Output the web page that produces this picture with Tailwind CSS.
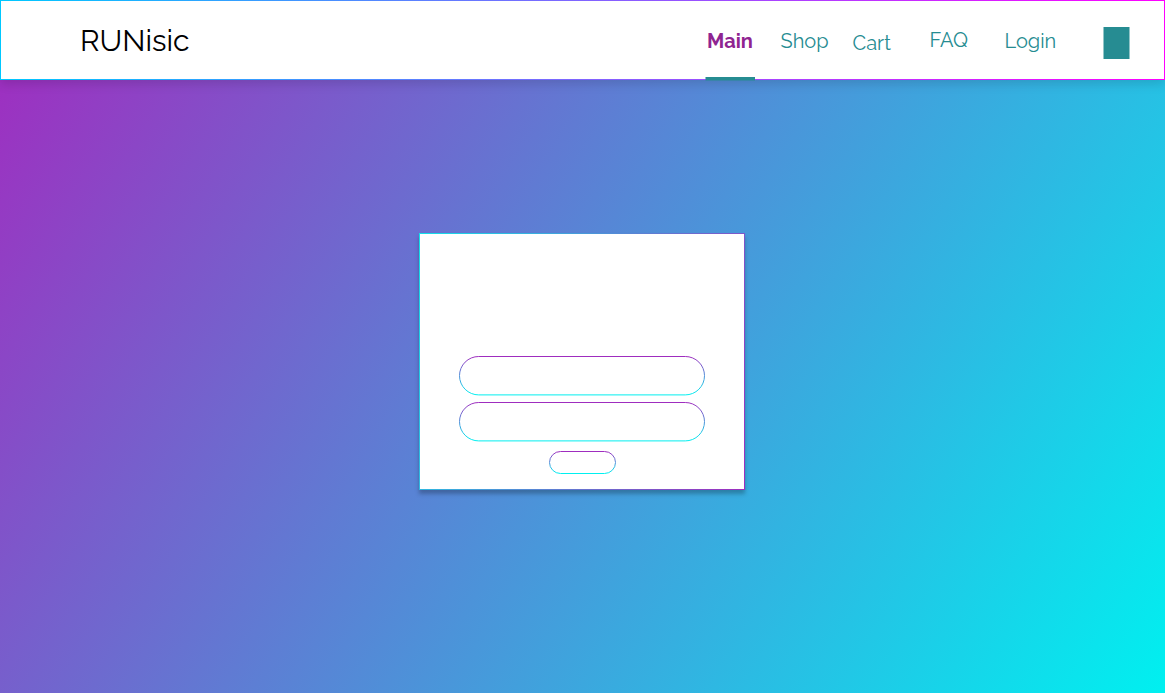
<!DOCTYPE html>
<html lang="en">
<head>
<meta charset="utf-8">
<title>RUNisic</title>
<script src="https://cdn.jsdelivr.net/npm/@tailwindcss/browser@4"></script>
</head>
<body class="flex h-[693px] w-[1165px] flex-col overflow-hidden bg-[linear-gradient(122deg,#a22abf,#00f0f0)] font-['Raleway','Lato',sans-serif]">
  <header class="z-10 h-20 shrink-0 bg-[linear-gradient(to_right,#00c8ff,#ff00ff)] p-px shadow-[0_4px_10px_rgba(0,0,0,0.13)]">
    <div class="flex h-full items-start bg-white pl-[79px] text-xl leading-6 text-[#268c92]">
      <div class="mt-5 h-10 w-[112px] shrink-0 text-[30px] leading-10 text-black">RUNisic</div>
      <nav class="ml-[513px] flex items-start">
        <a class="flex h-20 w-[50px] shrink-0 flex-col justify-between">
          <span class="mt-7 pl-[2px] font-bold text-[#8f2491]">Main</span>
          <svg class="h-1 w-full" fill="#268c92"><rect x="0.5" width="49.5" height="3.5"/></svg>
        </a>
        <a class="mt-7 ml-[25.5px] w-[48px]">Shop</a>
        <a class="mt-[30px] ml-6 w-[38px]">Cart</a>
        <a class="mt-[27px] ml-[39px] w-[39px]">FAQ</a>
        <a class="mt-7 ml-9 w-[51px]">Login</a>
        <svg class="mt-[26px] ml-[47.5px] h-8 w-[27px]" viewBox="0 0 27 32" fill="#268c92"><rect x="0.5" width="26" height="32"/></svg>
      </nav>
    </div>
  </header>
  <main class="flex grow items-start pt-[153px] pl-[419px]">
    <form class="h-[257px] w-[326px] bg-[linear-gradient(110deg,#10e0ea,#9f2dbf)] p-px shadow-[0_4px_4px_rgba(0,0,0,0.25)]">
      <div class="flex h-full flex-col items-center bg-white pt-[122px]">
        <svg class="h-[118px] w-[246px]" viewBox="0 0 246 118" fill="none" stroke="url(#edge)">
          <defs><linearGradient id="edge" x1="0" y1="0" x2="0" y2="1"><stop stop-color="#9f2dbf"/><stop offset="1" stop-color="#00f0f0"/></linearGradient></defs>
          <rect x="0.5" y="0.5" width="245" height="38.4" rx="19.2"/>
          <rect x="0.5" y="46.5" width="245" height="38.4" rx="19.2"/>
          <rect x="90.5" y="95.5" width="66" height="22" rx="11"/>
        </svg>
      </div>
    </form>
  </main>
</body>
</html>
